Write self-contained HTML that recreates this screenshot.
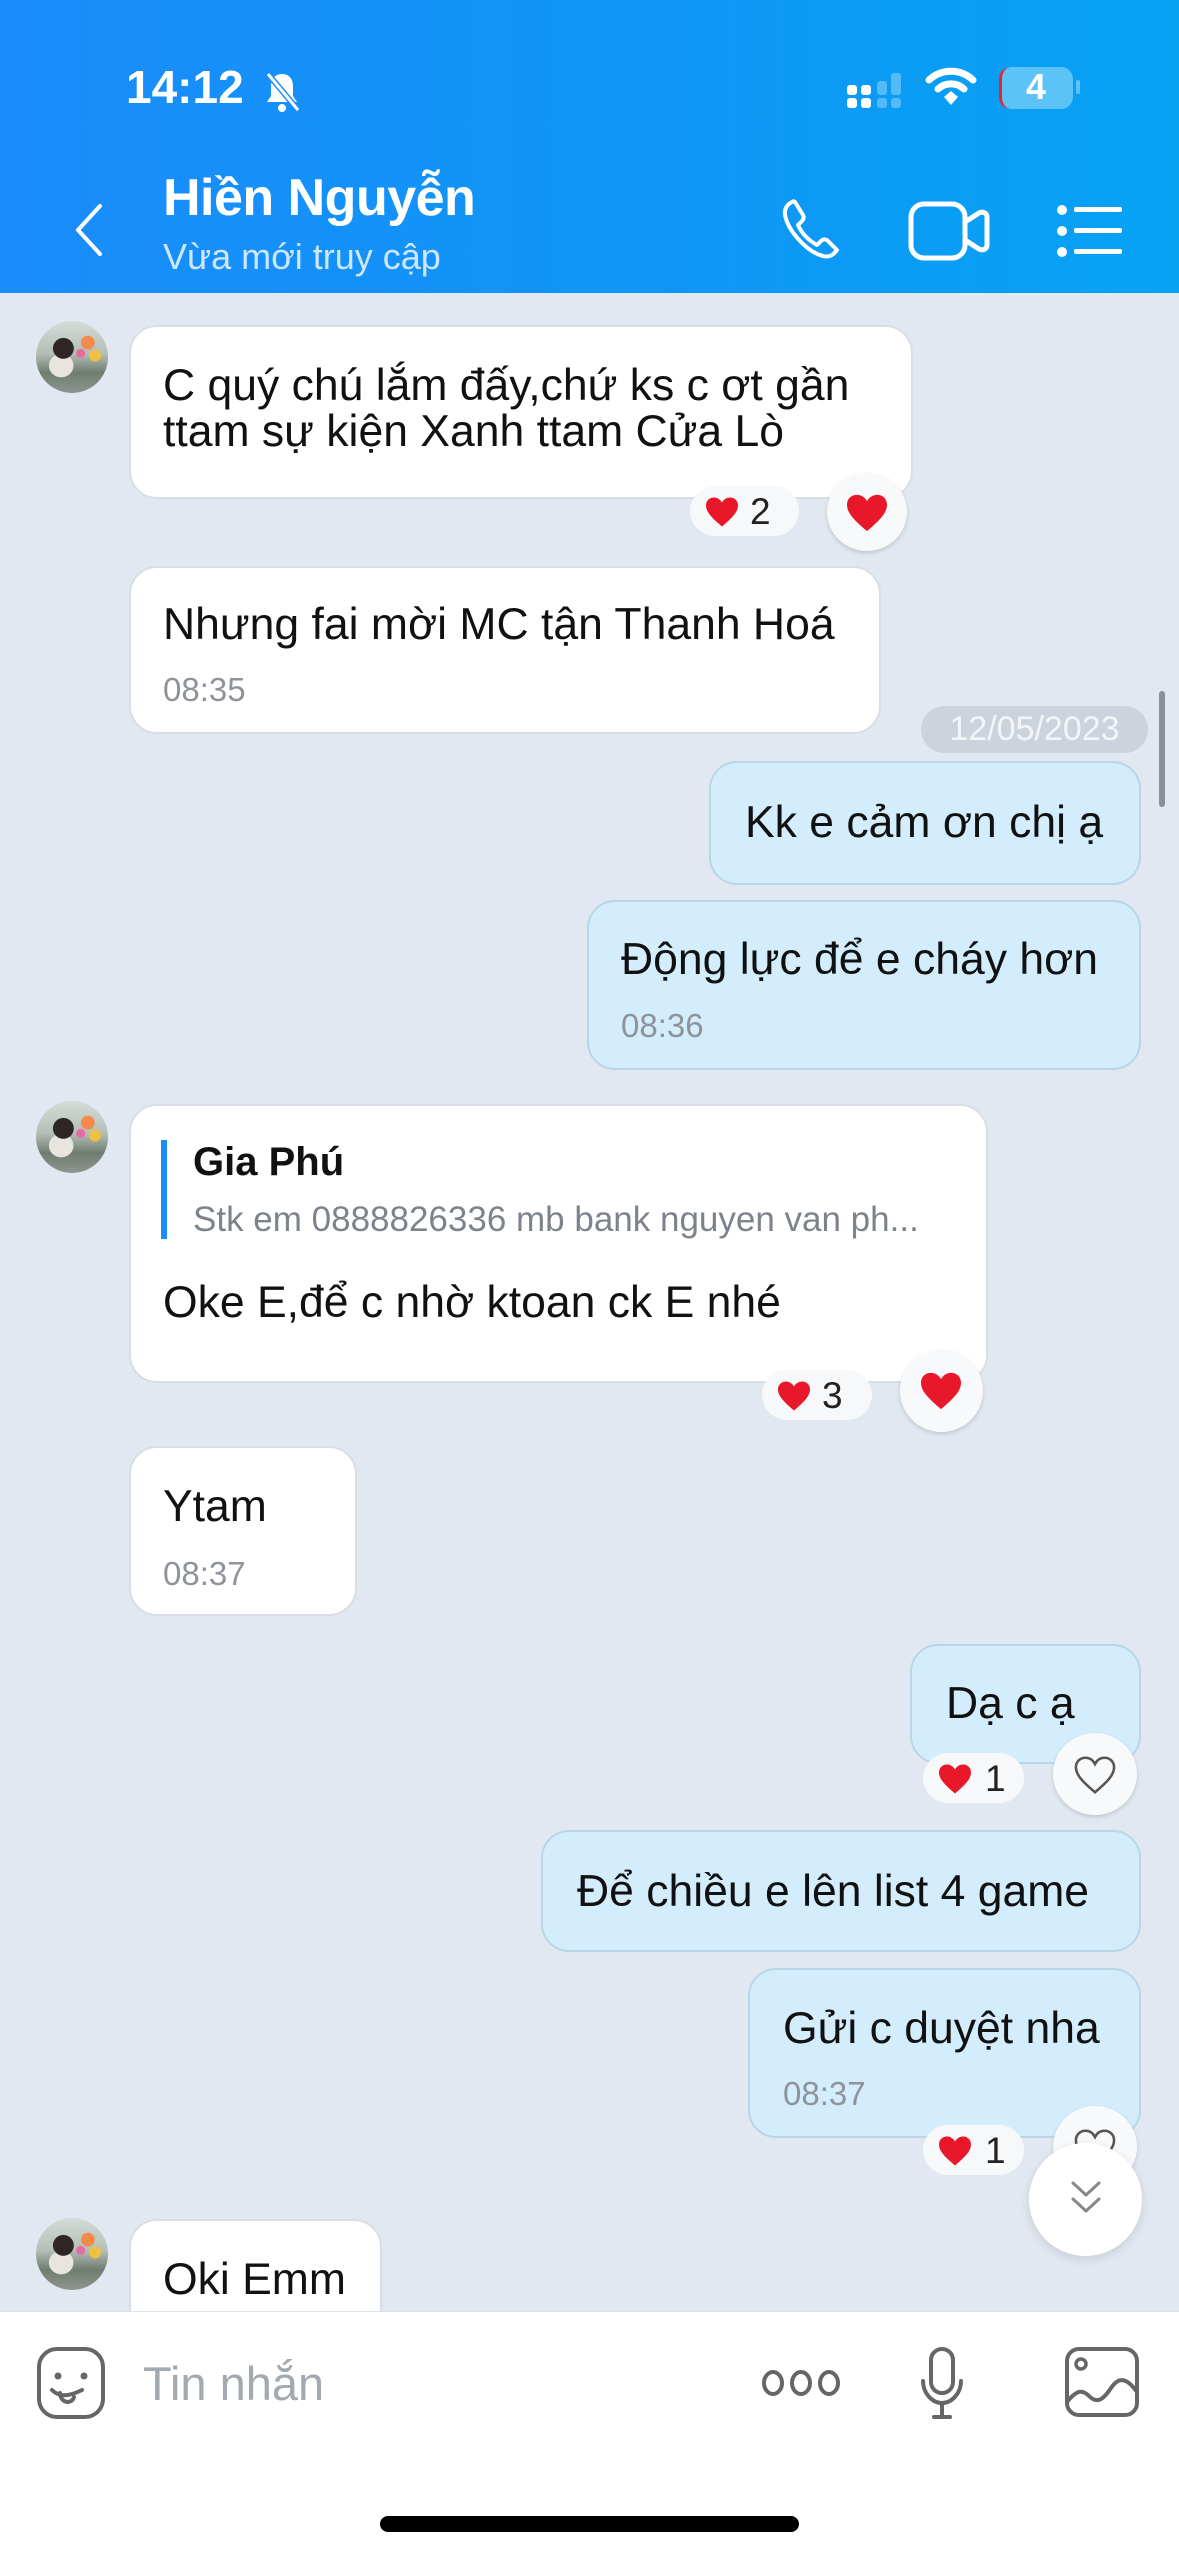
<!DOCTYPE html>
<html><head><meta charset="utf-8"><style>
*{margin:0;padding:0;box-sizing:border-box}
body{width:1179px;height:2556px;position:relative;overflow:hidden;background:#e2e8f1;font-family:"Liberation Sans","Noto Sans CJK SC",sans-serif;color:#111}
.a{position:absolute}
.hdr{left:0;top:0;width:1179px;height:293px;background:linear-gradient(90deg,#1a8cfb 0%,#0e97f7 60%,#06a3f3 100%)}
.b{position:absolute;background:#fff;border:2px solid #d9dee5;border-radius:28px}
.me{background:#d3edfc;border-color:#b9d6e6}
.t{position:absolute;font-size:44.5px;line-height:50px;white-space:nowrap}
.tm{position:absolute;font-size:33px;color:#8e939a;white-space:nowrap}
.av{position:absolute;left:36px;width:72px;height:72px;border-radius:50%;overflow:hidden;background:radial-gradient(circle at 72% 30%,#f48a4a 0 9%,transparent 10%),radial-gradient(circle at 82% 48%,#f0c040 0 8%,transparent 9%),radial-gradient(circle at 62% 45%,#e86aa0 0 7%,transparent 8%),radial-gradient(ellipse at 38% 38%,#2e2626 0 16%,transparent 17%),radial-gradient(ellipse at 35% 62%,#e8e4e0 0 18%,transparent 19%),linear-gradient(180deg,#d6dcd8 0%,#b4beb6 45%,#6f7d70 72%,#8d958e 100%)}
.pill{position:absolute;background:#f7f8fa;border-radius:26px;height:50px}
.circ{position:absolute;background:#f8f9fb;border-radius:50%;box-shadow:0 2px 4px rgba(0,0,0,.15)}
.pill span{position:absolute;font-size:37px;top:5px;color:#222}
</style></head><body>
<div class="a hdr"></div>
<div class="a" style="left:126px;top:60px;font-size:46px;font-weight:bold;color:#fff">14:12</div>
<svg class="a" style="left:262px;top:70px" width="40" height="44" viewBox="0 0 40 44"><path d="M20 4c-7 0-11 5-11 12v10l-4 6h30l-4-6V16c0-7-4-12-11-12z" fill="#fff"/><circle cx="20" cy="38" r="4" fill="#fff"/><path d="M6 4l30 36" stroke="#1a8cfb" stroke-width="6"/><path d="M6 4l30 36" stroke="#fff" stroke-width="3"/></svg>
<svg class="a" style="left:845px;top:73px" width="62" height="36"><g fill="#fff"><rect x="2" y="12" width="10" height="10" rx="3"/><rect x="16" y="12" width="10" height="10" rx="3"/><rect x="2" y="25" width="10" height="10" rx="3"/><rect x="16" y="25" width="10" height="10" rx="3"/></g><g fill="#fff" opacity=".3"><rect x="32" y="8" width="10" height="14" rx="3"/><rect x="46" y="0" width="10" height="22" rx="3"/><rect x="32" y="25" width="10" height="10" rx="3"/><rect x="46" y="25" width="10" height="10" rx="3"/></g></svg>
<svg class="a" style="left:925px;top:66px" width="52" height="42" viewBox="0 0 52 42"><path d="M4 14a32 32 0 0 1 44 0" stroke="#fff" stroke-width="7" fill="none" stroke-linecap="round"/><path d="M13 23a19 19 0 0 1 26 0" stroke="#fff" stroke-width="7" fill="none" stroke-linecap="round"/><path d="M19 31l7-6 7 6-7 8z" fill="#fff"/></svg>
<div class="a" style="left:999px;top:67px;width:74px;height:42px;border-radius:12px;background:#5cc3f8;border-left:3px solid #e22"></div>
<div class="a" style="left:1076px;top:80px;width:4px;height:14px;border-radius:2px;background:#5cc3f8"></div>
<div class="a" style="left:999px;top:66px;width:74px;text-align:center;font-size:36px;font-weight:bold;color:#fff">4</div>
<svg class="a" style="left:68px;top:200px" width="40" height="60"><path d="M32 6L10 30l22 24" stroke="#fff" stroke-width="4" fill="none" stroke-linecap="round" stroke-linejoin="round"/></svg>
<div class="a" style="left:163px;top:168px;font-size:52px;font-weight:bold;color:#fff;letter-spacing:-.5px">Hiền Nguyễn</div>
<div class="a" style="left:163px;top:236px;font-size:36px;color:#cfe6fd">Vừa mới truy cập</div>
<svg class="a" style="left:778px;top:196px" width="66" height="66" viewBox="0 0 66 66"><path d="M14 6c-4 2-8 6-7 13 3 16 22 37 38 41 7 2 11-2 14-6l-10-10c-2-1-4-1-6 1l-4 4c-9-5-15-11-19-20l4-4c2-2 2-4 1-6L17 6c-1-1-2-1-3 0z" stroke="#fff" stroke-width="4" fill="none" stroke-linejoin="round"/></svg>
<svg class="a" style="left:908px;top:200px" width="84" height="64" viewBox="0 0 84 64"><rect x="3" y="4" width="54" height="54" rx="13" stroke="#fff" stroke-width="5" fill="none"/><path d="M57 22l14-9c4-2 8 0 8 4v28c0 4-4 6-8 4l-14-9" stroke="#fff" stroke-width="5" fill="none" stroke-linejoin="round"/></svg>
<svg class="a" style="left:1056px;top:204px" width="70" height="54"><g fill="#fff"><circle cx="6" cy="6" r="5"/><circle cx="6" cy="27" r="5"/><circle cx="6" cy="48" r="5"/><rect x="18" y="3" width="48" height="5" rx="2"/><rect x="18" y="24" width="48" height="5" rx="2"/><rect x="18" y="45" width="48" height="5" rx="2"/></g></svg>

<div class="av" style="top:321px"></div>
<div class="b" style="left:129px;top:325px;width:784px;height:174px"></div>
<div class="t" style="left:163px;top:361px">C quý chú lắm đấy,chứ ks c ơt gần</div>
<div class="t" style="left:163px;top:407px">ttam sự kiện Xanh ttam Cửa Lò</div>
<div class="pill" style="left:690px;top:486px;width:109px"><svg class="a" style="left:14px;top:10px" width="36" height="32" viewBox="0 0 24 22"><path d="M12 21C5 15 1 11 1 6.5 1 3 3.5 1 6.5 1 9 1 11 2.5 12 4.5 13 2.5 15 1 17.5 1 20.5 1 23 3 23 6.5 23 11 19 15 12 21z" fill="#e8182a"/></svg><span style="left:60px">2</span></div>
<div class="circ" style="left:827px;top:473px;width:80px;height:78px"><svg class="a" style="left:18px;top:20px" width="44" height="40" viewBox="0 0 24 22"><path d="M12 21C5 15 1 11 1 6.5 1 3 3.5 1 6.5 1 9 1 11 2.5 12 4.5 13 2.5 15 1 17.5 1 20.5 1 23 3 23 6.5 23 11 19 15 12 21z" fill="#e8182a"/></svg></div>

<div class="b" style="left:129px;top:566px;width:752px;height:168px"></div>
<div class="t" style="left:163px;top:600px">Nhưng fai mời MC tận Thanh Hoá</div>
<div class="tm" style="left:163px;top:671px">08:35</div>
<div class="a" style="left:921px;top:706px;width:227px;height:47px;border-radius:24px;background:#cdd3dc;color:#f3f5f8;font-size:34px;text-align:center;line-height:47px">12/05/2023</div>
<div class="a" style="left:1159px;top:691px;width:6px;height:116px;border-radius:3px;background:#8b9097"></div>

<div class="b me" style="left:709px;top:761px;width:432px;height:124px"></div>
<div class="t" style="left:745px;top:798px">Kk e cảm ơn chị ạ</div>
<div class="b me" style="left:587px;top:900px;width:554px;height:170px"></div>
<div class="t" style="left:621px;top:935px">Động lực để e cháy hơn</div>
<div class="tm" style="left:621px;top:1007px">08:36</div>

<div class="av" style="top:1101px"></div>
<div class="b" style="left:129px;top:1104px;width:859px;height:279px"></div>
<div class="a" style="left:161px;top:1140px;width:6px;height:99px;background:#1a8cfb"></div>
<div class="a" style="left:193px;top:1140px;font-size:40px;font-weight:bold;color:#111">Gia Phú</div>
<div class="a" style="left:193px;top:1200px;font-size:35px;color:#7d838b;white-space:nowrap">Stk em 0888826336 mb bank nguyen van ph...</div>
<div class="t" style="left:163px;top:1278px">Oke E,để c nhờ ktoan ck E nhé</div>
<div class="pill" style="left:762px;top:1370px;width:110px"><svg class="a" style="left:14px;top:10px" width="36" height="32" viewBox="0 0 24 22"><path d="M12 21C5 15 1 11 1 6.5 1 3 3.5 1 6.5 1 9 1 11 2.5 12 4.5 13 2.5 15 1 17.5 1 20.5 1 23 3 23 6.5 23 11 19 15 12 21z" fill="#e8182a"/></svg><span style="left:60px">3</span></div>
<div class="circ" style="left:900px;top:1350px;width:83px;height:82px"><svg class="a" style="left:19px;top:21px" width="44" height="40" viewBox="0 0 24 22"><path d="M12 21C5 15 1 11 1 6.5 1 3 3.5 1 6.5 1 9 1 11 2.5 12 4.5 13 2.5 15 1 17.5 1 20.5 1 23 3 23 6.5 23 11 19 15 12 21z" fill="#e8182a"/></svg></div>

<div class="b" style="left:129px;top:1446px;width:228px;height:170px"></div>
<div class="t" style="left:163px;top:1482px">Ytam</div>
<div class="tm" style="left:163px;top:1555px">08:37</div>

<div class="b me" style="left:910px;top:1644px;width:231px;height:120px"></div>
<div class="t" style="left:946px;top:1679px">Dạ c ạ</div>
<div class="pill" style="left:923px;top:1753px;width:101px"><svg class="a" style="left:14px;top:10px" width="36" height="32" viewBox="0 0 24 22"><path d="M12 21C5 15 1 11 1 6.5 1 3 3.5 1 6.5 1 9 1 11 2.5 12 4.5 13 2.5 15 1 17.5 1 20.5 1 23 3 23 6.5 23 11 19 15 12 21z" fill="#e8182a"/></svg><span style="left:62px">1</span></div>
<div class="circ" style="left:1053px;top:1733px;width:84px;height:82px"><svg class="a" style="left:20px;top:22px" width="44" height="40" viewBox="0 0 24 22"><path d="M12 20.5C5.5 15 1.5 11 1.5 6.8 1.5 3.5 4 1.5 6.8 1.5 9.2 1.5 11 3 12 5 13 3 14.8 1.5 17.2 1.5 20 1.5 22.5 3.5 22.5 6.8 22.5 11 18.5 15 12 20.5z" fill="none" stroke="#555" stroke-width="1.4"/></svg></div>

<div class="b me" style="left:541px;top:1830px;width:600px;height:122px"></div>
<div class="t" style="left:577px;top:1867px">Để chiều e lên list 4 game</div>
<div class="b me" style="left:748px;top:1968px;width:393px;height:170px"></div>
<div class="t" style="left:783px;top:2004px">Gửi c duyệt nha</div>
<div class="tm" style="left:783px;top:2075px">08:37</div>
<div class="pill" style="left:923px;top:2125px;width:101px"><svg class="a" style="left:14px;top:10px" width="36" height="32" viewBox="0 0 24 22"><path d="M12 21C5 15 1 11 1 6.5 1 3 3.5 1 6.5 1 9 1 11 2.5 12 4.5 13 2.5 15 1 17.5 1 20.5 1 23 3 23 6.5 23 11 19 15 12 21z" fill="#e8182a"/></svg><span style="left:62px">1</span></div>
<div class="circ" style="left:1053px;top:2106px;width:84px;height:82px"><svg class="a" style="left:20px;top:22px" width="44" height="40" viewBox="0 0 24 22"><path d="M12 20.5C5.5 15 1.5 11 1.5 6.8 1.5 3.5 4 1.5 6.8 1.5 9.2 1.5 11 3 12 5 13 3 14.8 1.5 17.2 1.5 20 1.5 22.5 3.5 22.5 6.8 22.5 11 18.5 15 12 20.5z" fill="none" stroke="#555" stroke-width="1.4"/></svg></div>
<div class="a" style="left:1029px;top:2143px;width:113px;height:113px;border-radius:50%;background:#fff;box-shadow:0 3px 10px rgba(0,0,0,.12)"><svg class="a" style="left:40px;top:36px" width="34" height="40"><path d="M4 4l13 12 13-12M4 20l13 12 13-12" stroke="#888" stroke-width="3" fill="none" stroke-linecap="round" stroke-linejoin="round"/></svg></div>

<div class="av" style="top:2218px"></div>
<div class="b" style="left:129px;top:2219px;width:253px;height:140px"></div>
<div class="t" style="left:163px;top:2255px">Oki Emm</div>

<div class="a" style="left:0;top:2311px;width:1179px;height:245px;background:#fff;border-top:1px solid #dde2e8"></div>
<svg class="a" style="left:36px;top:2346px" width="74" height="74" viewBox="0 0 74 74"><rect x="3" y="3" width="64" height="68" rx="18" stroke="#666" stroke-width="4" fill="none"/><circle cx="22" cy="30" r="3.5" fill="#666"/><circle cx="48" cy="30" r="3.5" fill="#666"/><path d="M16 44c6 6 14 8 30 0M24 47c0 10 12 12 14 4" stroke="#666" stroke-width="4" fill="none" stroke-linecap="round"/></svg>
<div class="a" style="left:143px;top:2356px;font-size:47px;color:#a2a9b0">Tin nhắn</div>
<svg class="a" style="left:759px;top:2363px" width="84" height="40"><g stroke="#666" stroke-width="4" fill="none"><ellipse cx="14" cy="20" rx="9" ry="11"/><ellipse cx="42" cy="20" rx="9" ry="11"/><ellipse cx="70" cy="20" rx="9" ry="11"/></g></svg>
<svg class="a" style="left:918px;top:2345px" width="50" height="76" viewBox="0 0 50 76"><rect x="13" y="4" width="22" height="44" rx="11" stroke="#666" stroke-width="4" fill="none"/><path d="M5 36c0 12 9 22 19 22s19-10 19-22M24 58v12M16 72h16" stroke="#666" stroke-width="4" fill="none" stroke-linecap="round"/></svg>
<svg class="a" style="left:1064px;top:2346px" width="78" height="74" viewBox="0 0 78 74"><rect x="3" y="3" width="70" height="66" rx="12" stroke="#666" stroke-width="4" fill="none"/><circle cx="17" cy="18" r="5" stroke="#666" stroke-width="3.5" fill="none"/><path d="M3 56c8-10 14-14 22-6s14 4 22-8 16-10 26 4" stroke="#666" stroke-width="4" fill="none"/></svg>
<div class="a" style="left:380px;top:2516px;width:419px;height:16px;border-radius:8px;background:#000"></div>
</body></html>
